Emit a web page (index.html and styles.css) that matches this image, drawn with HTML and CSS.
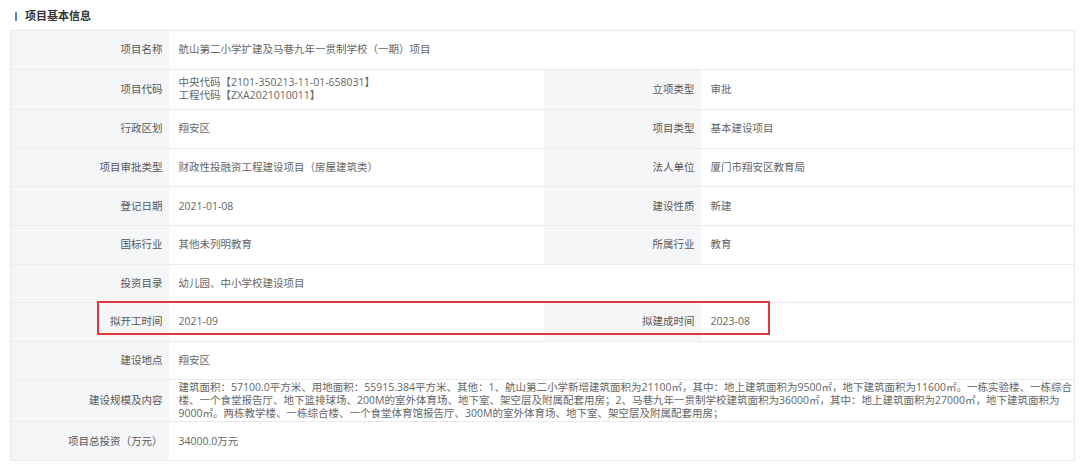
FILE: index.html
```html
<!DOCTYPE html>
<html>
	<head>
		<meta charset="utf-8" />
		<title>项目基本信息</title>
		<link rel="stylesheet" href="styles.css">
	</head>
	<body>
		<div class="panel">
			<h3 class="panel-title">项目基本信息</h3>
			<div class="info-box">
				<table class="info-table">
					<colgroup>
						<col class="c-label">
						<col class="c-value">
						<col class="c-label2">
						<col>
					</colgroup>
					<tr>
						<th>项目名称</th>
						<td colspan="3">航山第二小学扩建及马巷九年一贯制学校（一期）项目</td>
					</tr>
					<tr>
						<th>项目代码</th>
						<td class="multi">中央代码【2101-350213-11-01-658031】<br>工程代码【ZXA2021010011】</td>
						<th>立项类型</th>
						<td>审批</td>
					</tr>
					<tr>
						<th>行政区划</th>
						<td>翔安区</td>
						<th>项目类型</th>
						<td>基本建设项目</td>
					</tr>
					<tr>
						<th>项目审批类型</th>
						<td>财政性投融资工程建设项目（房屋建筑类）</td>
						<th>法人单位</th>
						<td>厦门市翔安区教育局</td>
					</tr>
					<tr>
						<th>登记日期</th>
						<td>2021-01-08</td>
						<th>建设性质</th>
						<td>新建</td>
					</tr>
					<tr>
						<th>国标行业</th>
						<td>其他未列明教育</td>
						<th>所属行业</th>
						<td>教育</td>
					</tr>
					<tr>
						<th>投资目录</th>
						<td colspan="3">幼儿园、中小学校建设项目</td>
					</tr>
					<tr>
						<th>拟开工时间</th>
						<td>2021-09</td>
						<th>拟建成时间</th>
						<td>2023-08</td>
					</tr>
					<tr>
						<th>建设地点</th>
						<td colspan="3">翔安区</td>
					</tr>
					<tr>
						<th>建设规模及内容</th>
						<td colspan="3" class="multi">建筑面积：57100.0平方米、用地面积：55915.384平方米、其他：1、航山第二小学新增建筑面积为21100㎡，其中：地上建筑面积为9500㎡，地下建筑面积为11600㎡。一栋实验楼、一栋综合<br>楼、一个食堂报告厅、地下篮排球场、200M的室外体育场、地下室、架空层及附属配套用房；2、马巷九年一贯制学校建筑面积为36000㎡，其中：地上建筑面积为27000㎡，地下建筑面积为<br>9000㎡。两栋教学楼、一栋综合楼、一个食堂体育馆报告厅、300M的室外体育场、地下室、架空层及附属配套用房；</td>
					</tr>
					<tr>
						<th>项目总投资（万元）</th>
						<td colspan="3">34000.0万元</td>
					</tr>
				</table>
				<!-- 红框标注 -->
				<div class="mark"></div>
			</div>
		</div>
	</body>
</html>
```

FILE: styles.css
```css
*{margin: 0;padding: 0;}
body{background-color: #fff;
font-family: "Open Sans", "Noto Sans CJK SC", sans-serif;
font-size: 10.5px;
color: #666;
}
.panel{padding: 8px 5px 0 10px;}
.panel-title{font-size: 11px;
font-weight: bold;
color: #333;
height: 22px;
line-height: 16px;
padding-left: 15px;
position: relative;
}
.panel-title::before{content: "";
position: absolute;
left: 5px;
top: 4px;
width: 2px;
height: 9px;
background-color: #4a86d8;
}
.info-box{position: relative;
width: 1065px;
}
.info-table{width: 100%;
border-collapse: collapse;
table-layout: fixed;
border: 1px solid #e8e8e8;
}
.c-label{width: 158px;}
.c-value{width: 375px;}
.c-label2{width: 157px;}
.info-table th,.info-table td{height: 37.6px;
border-bottom: 1px solid #ebebeb;
font-weight: normal;
line-height: 13px;
}
.info-table th{background-color: #f5f6f8;
text-align: right;
padding: 0 6px 0 0;
color: #555;
}
.info-table td{background-color: #fff;
text-align: left;
padding: 0 8px 0 10px;
}
.info-table td.multi{padding-top: 1px;padding-bottom: 1px;white-space: nowrap;}
.mark{position: absolute;
left: 87px;
top: 271px;
width: 669px;
height: 30px;
border: 2px solid #e0363c;
}
```
